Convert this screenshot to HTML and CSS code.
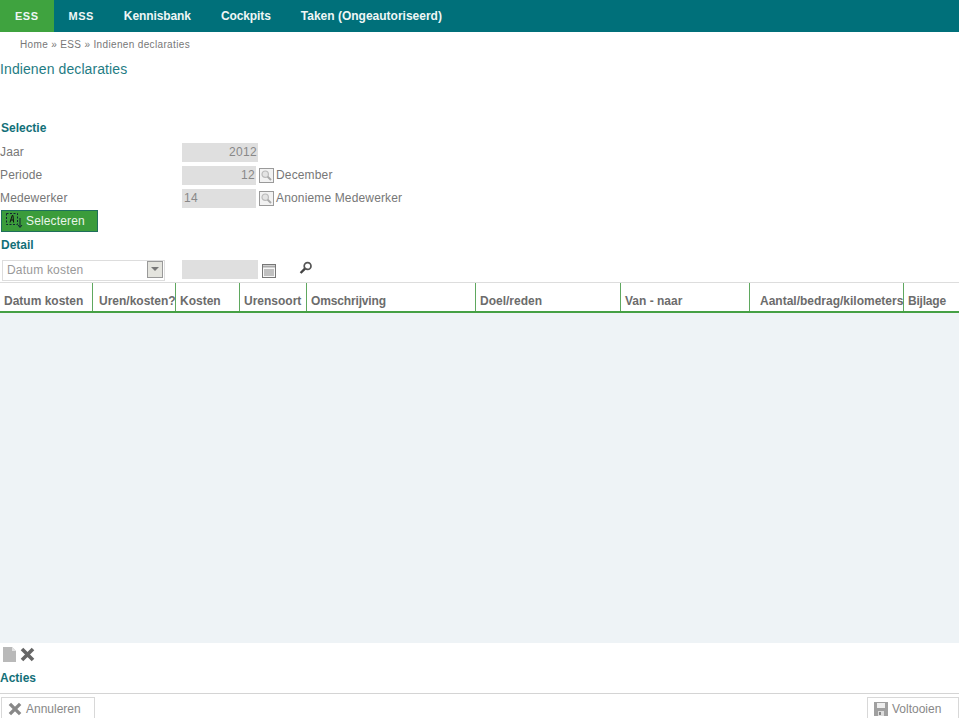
FILE: index.html
```html
<!DOCTYPE html>
<html lang="nl">

<head>
  <meta charset="UTF-8">
  <meta name="viewport" content="width=device-width, initial-scale=1.0">
  <title>Indienen declaraties</title>

  <link rel="stylesheet" href="styles.css">
</head>

<body>
  <nav class="topnav">
    <a class="topnav-item topnav-item-active topnav-item-short">ESS</a>
    <a class="topnav-item topnav-item-short">MSS</a>
    <a class="topnav-item topnav-item-tight">Kennisbank</a>
    <a class="topnav-item topnav-item-tight">Cockpits</a>
    <a class="topnav-item">Taken (Ongeautoriseerd)</a>
  </nav>

  <div class="breadcrumb">Home » ESS » Indienen declaraties</div>
  <h1 class="page-title">Indienen declaraties</h1>

  <h2 class="section-title section-selectie">Selectie</h2>
  <div class="form-rows">
    <div class="form-row form-row-jaar">
      <label class="form-label">Jaar</label>
      <input class="field field-wide field-right" type="text" value="2012" disabled>
    </div>
    <div class="form-row">
      <label class="form-label">Periode</label>
      <input class="field field-narrow field-right" type="text" value="12" disabled>
      <span class="lookup">
        <svg width="15" height="15" viewBox="0 0 15 15">
          <rect x="0.5" y="0.5" width="14" height="14" fill="#f2f2f2" stroke="#9a9a9a"/>
          <circle cx="6.2" cy="6.2" r="3.2" fill="#e4e4e4" stroke="#bbb" stroke-width="1.2"/>
          <path d="M8.6 8.6 12 12" stroke="#aaa" stroke-width="2"/>
        </svg>
      </span>
      <span class="field-note">December</span>
    </div>
    <div class="form-row">
      <label class="form-label">Medewerker</label>
      <input class="field field-narrow" type="text" value="14" disabled>
      <span class="lookup">
        <svg width="15" height="15" viewBox="0 0 15 15">
          <rect x="0.5" y="0.5" width="14" height="14" fill="#f2f2f2" stroke="#9a9a9a"/>
          <circle cx="6.2" cy="6.2" r="3.2" fill="#e4e4e4" stroke="#bbb" stroke-width="1.2"/>
          <path d="M8.6 8.6 12 12" stroke="#aaa" stroke-width="2"/>
        </svg>
      </span>
      <span class="field-note">Anonieme Medewerker</span>
    </div>
  </div>

  <button type="button" class="btn-select">
    <svg width="18" height="18" viewBox="0 0 18 18">
      <rect x="1.5" y="1.5" width="11" height="11" fill="none" stroke="#123" stroke-dasharray="2 1.5"/>
      <path d="M5 10.5 7.2 3.5h.8l.6 7M5.8 8h2.6" fill="none" stroke="#111" stroke-width="1"/>
      <path d="M15 6v9M13 13l2 2.5 2-2.5" fill="none" stroke="#123" stroke-width="1"/>
    </svg>
    Selecteren
  </button>

  <h2 class="section-title section-detail">Detail</h2>
  <div class="filter-row">
    <div class="select-box">
      <span>Datum kosten</span>
      <span class="select-arrow"></span>
    </div>
    <input class="field field-wide field-filter" type="text" disabled>
    <svg class="icon-calendar" width="14" height="14" viewBox="0 0 14 14">
      <rect x="0.5" y="0.5" width="13" height="13" fill="#f6f6f6" stroke="#777"/>
      <path d="M1 2.5h12" stroke="#aaa" stroke-width="2"/>
      <path d="M3 5v7M5 5v7M7 5v7M9 5v7M11 5v7" stroke="#8a8a8a"/>
    </svg>
    <svg class="icon-search" width="14" height="14" viewBox="0 0 14 14">
      <circle cx="8.6" cy="5" r="3.4" fill="#fff" stroke="#555" stroke-width="1.7"/>
      <path d="M6 7.6 1.6 12" stroke="#444" stroke-width="2.4"/>
    </svg>
  </div>

  <div class="grid-head">
    <div class="col col-datum">Datum kosten</div>
    <div class="col col-uren">Uren/kosten?</div>
    <div class="col col-kosten">Kosten</div>
    <div class="col col-soort">Urensoort</div>
    <div class="col col-omschrijving">Omschrijving</div>
    <div class="col col-doel">Doel/reden</div>
    <div class="col col-van">Van - naar</div>
    <div class="col col-aantal">Aantal/bedrag/kilometers</div>
    <div class="col col-bijlage">Bijlage</div>
  </div>
  <div class="grid-body"></div>

  <div class="grid-tools">
    <svg width="13" height="15" viewBox="0 0 13 15">
      <path d="M0 0h9l4 4v11H0z" fill="#b9b9b9"/>
      <path d="M9 0l4 4H9z" fill="#e2e2e2"/>
    </svg>
    <svg width="15" height="15" viewBox="0 0 15 15">
      <path d="M2 2l11 11M13 2 2 13" stroke="#666" stroke-width="3.6"/>
    </svg>
  </div>

  <h2 class="section-title section-acties">Acties</h2>
  <footer class="actions">
    <button type="button" class="btn-action">
      <svg width="14" height="14" viewBox="0 0 15 15">
        <path d="M2 2l11 11M13 2 2 13" stroke="#888" stroke-width="3.6"/>
      </svg>
      Annuleren
    </button>
    <button type="button" class="btn-action btn-finish">
      <svg width="14" height="14" viewBox="0 0 14 14">
        <path d="M0 0h14v14H0z" fill="#a0a0a0"/>
        <path d="M3 1h8v5H3z" fill="#eee"/>
        <path d="M4 9h6v5H4z" fill="#ddd"/>
        <path d="M5 10h2v3H5z" fill="#888"/>
      </svg>
      Voltooien
    </button>
  </footer>
</body>

</html>
```

FILE: styles.css
```css
* {
  box-sizing: border-box;
}

body {
  margin: 0;
  height: 718px;
  overflow: hidden;
  background: #fff;
  font-family: "Liberation Sans", Arial, sans-serif;
  font-size: 12px;
  color: #777;
}

.topnav {
  display: flex;
  height: 32px;
  background: #00707a;
}

.topnav-item {
  padding: 0 15px;
  line-height: 32px;
  font-weight: bold;
  color: #eef6f6;
}

.topnav-item-tight {
  letter-spacing: -0.1px;
}

.topnav-item-short {
  font-size: 11px;
  letter-spacing: 0.5px;
}

.topnav-item-active {
  background: #3fa33f;
}

.breadcrumb {
  height: 26px;
  padding-left: 20px;
  font-size: 10px;
  letter-spacing: 0.35px;
  line-height: 26px;
  color: #777;
}

.page-title {
  margin: 0;
  height: 22px;
  font-size: 14px;
  font-weight: normal;
  letter-spacing: 0.1px;
  line-height: 22px;
  color: #1f7c84;
}

.section-title {
  margin: 0;
  font-size: 12px;
  font-weight: bold;
  line-height: 14px;
  color: #126f78;
}

.section-selectie {
  margin-top: 41px;
  padding-left: 1px;
}

.form-rows {
  display: flex;
  flex-direction: column;
  gap: 3px;
  margin-top: 7px;
  letter-spacing: 0.15px;
}

.form-row {
  display: flex;
  align-items: center;
  height: 20px;
}

.form-label {
  width: 182px;
  flex-shrink: 0;
}

.field {
  height: 19px;
  padding: 0 1px 0 2px;
  border: 0;
  background: #dfdfdf;
  font-family: inherit;
  font-size: 12px;
  letter-spacing: 0.3px;
  color: #888;
  opacity: 1;
}

.field-wide {
  width: 76px;
}

.field-narrow {
  width: 74px;
}

.field-right {
  text-align: right;
}

.field-filter {
  margin-bottom: 3px;
}

.lookup {
  display: flex;
  margin-left: 3px;
}

.field-note {
  margin-left: 2px;
}

.btn-select {
  display: flex;
  align-items: center;
  gap: 3px;
  width: 97px;
  height: 22px;
  margin: 2px 0 0 1px;
  padding: 0 0 0 3px;
  border: 1px solid #1f6f5c;
  background: #3b9c3b;
  font-family: inherit;
  font-size: 12px;
  letter-spacing: 0.15px;
  color: #e9f5e9;
}

.section-detail {
  margin-top: 6px;
  padding-left: 1px;
}

.filter-row {
  display: flex;
  align-items: center;
  height: 21px;
  margin-top: 8px;
  padding-left: 2px;
}

.select-box {
  display: flex;
  align-items: center;
  justify-content: space-between;
  width: 163px;
  height: 21px;
  margin-right: 17px;
  padding: 0 1px 2px 4px;
  border: 1px solid #ddd;
  letter-spacing: 0.2px;
  color: #999;
}

.select-arrow {
  position: relative;
  width: 16px;
  height: 17px;
  border: 1px solid #999;
  background: #e4e4de;
}

.select-arrow::after {
  content: "";
  position: absolute;
  left: 3px;
  top: 5px;
  border-left: 4px solid transparent;
  border-right: 4px solid transparent;
  border-top: 4px solid #777;
}

.icon-calendar {
  margin: 0 0 0 4px;
}

.icon-search {
  margin: -6px 0 0 23px;
}

.grid-head {
  display: flex;
  height: 31px;
  margin-top: 1px;
  border-top: 1px solid #ddd;
  border-bottom: 2px solid #45a045;
  font-weight: bold;
  color: #6c6c6c;
}

.col {
  flex-shrink: 0;
  padding: 12px 0 0 4px;
  border-right: 1px solid #5fa85f;
  line-height: 13px;
  white-space: nowrap;
}

.col-datum { width: 93px; }
.col-uren { width: 83px; padding-left: 6px; }
.col-kosten { width: 64px; }
.col-soort { width: 67px; }
.col-omschrijving { width: 169px; letter-spacing: -0.15px; }
.col-doel { width: 145px; }
.col-van { width: 129px; }
.col-aantal { width: 154px; padding-left: 10px; }
.col-bijlage { width: 55px; border-right: 0; letter-spacing: -0.2px; }

.grid-body {
  height: 330px;
  background: #eef3f6;
}

.grid-tools {
  display: flex;
  align-items: center;
  gap: 4px;
  height: 15px;
  margin-top: 4px;
  padding-left: 3px;
}

.section-acties {
  margin-top: 9px;
}

.actions {
  display: flex;
  justify-content: space-between;
  height: 25px;
  margin-top: 8px;
  padding: 3px 0 0 1px;
  border-top: 1px solid #d4d4d4;
}

.btn-action {
  display: flex;
  align-items: center;
  gap: 4px;
  width: 94px;
  height: 22px;
  padding: 0 0 0 6px;
  border: 1px solid #d8d8d8;
  border-bottom: 0;
  background: #fff;
  font-family: inherit;
  font-size: 12px;
  color: #888;
}

.btn-finish {
  width: 92px;
}
```
